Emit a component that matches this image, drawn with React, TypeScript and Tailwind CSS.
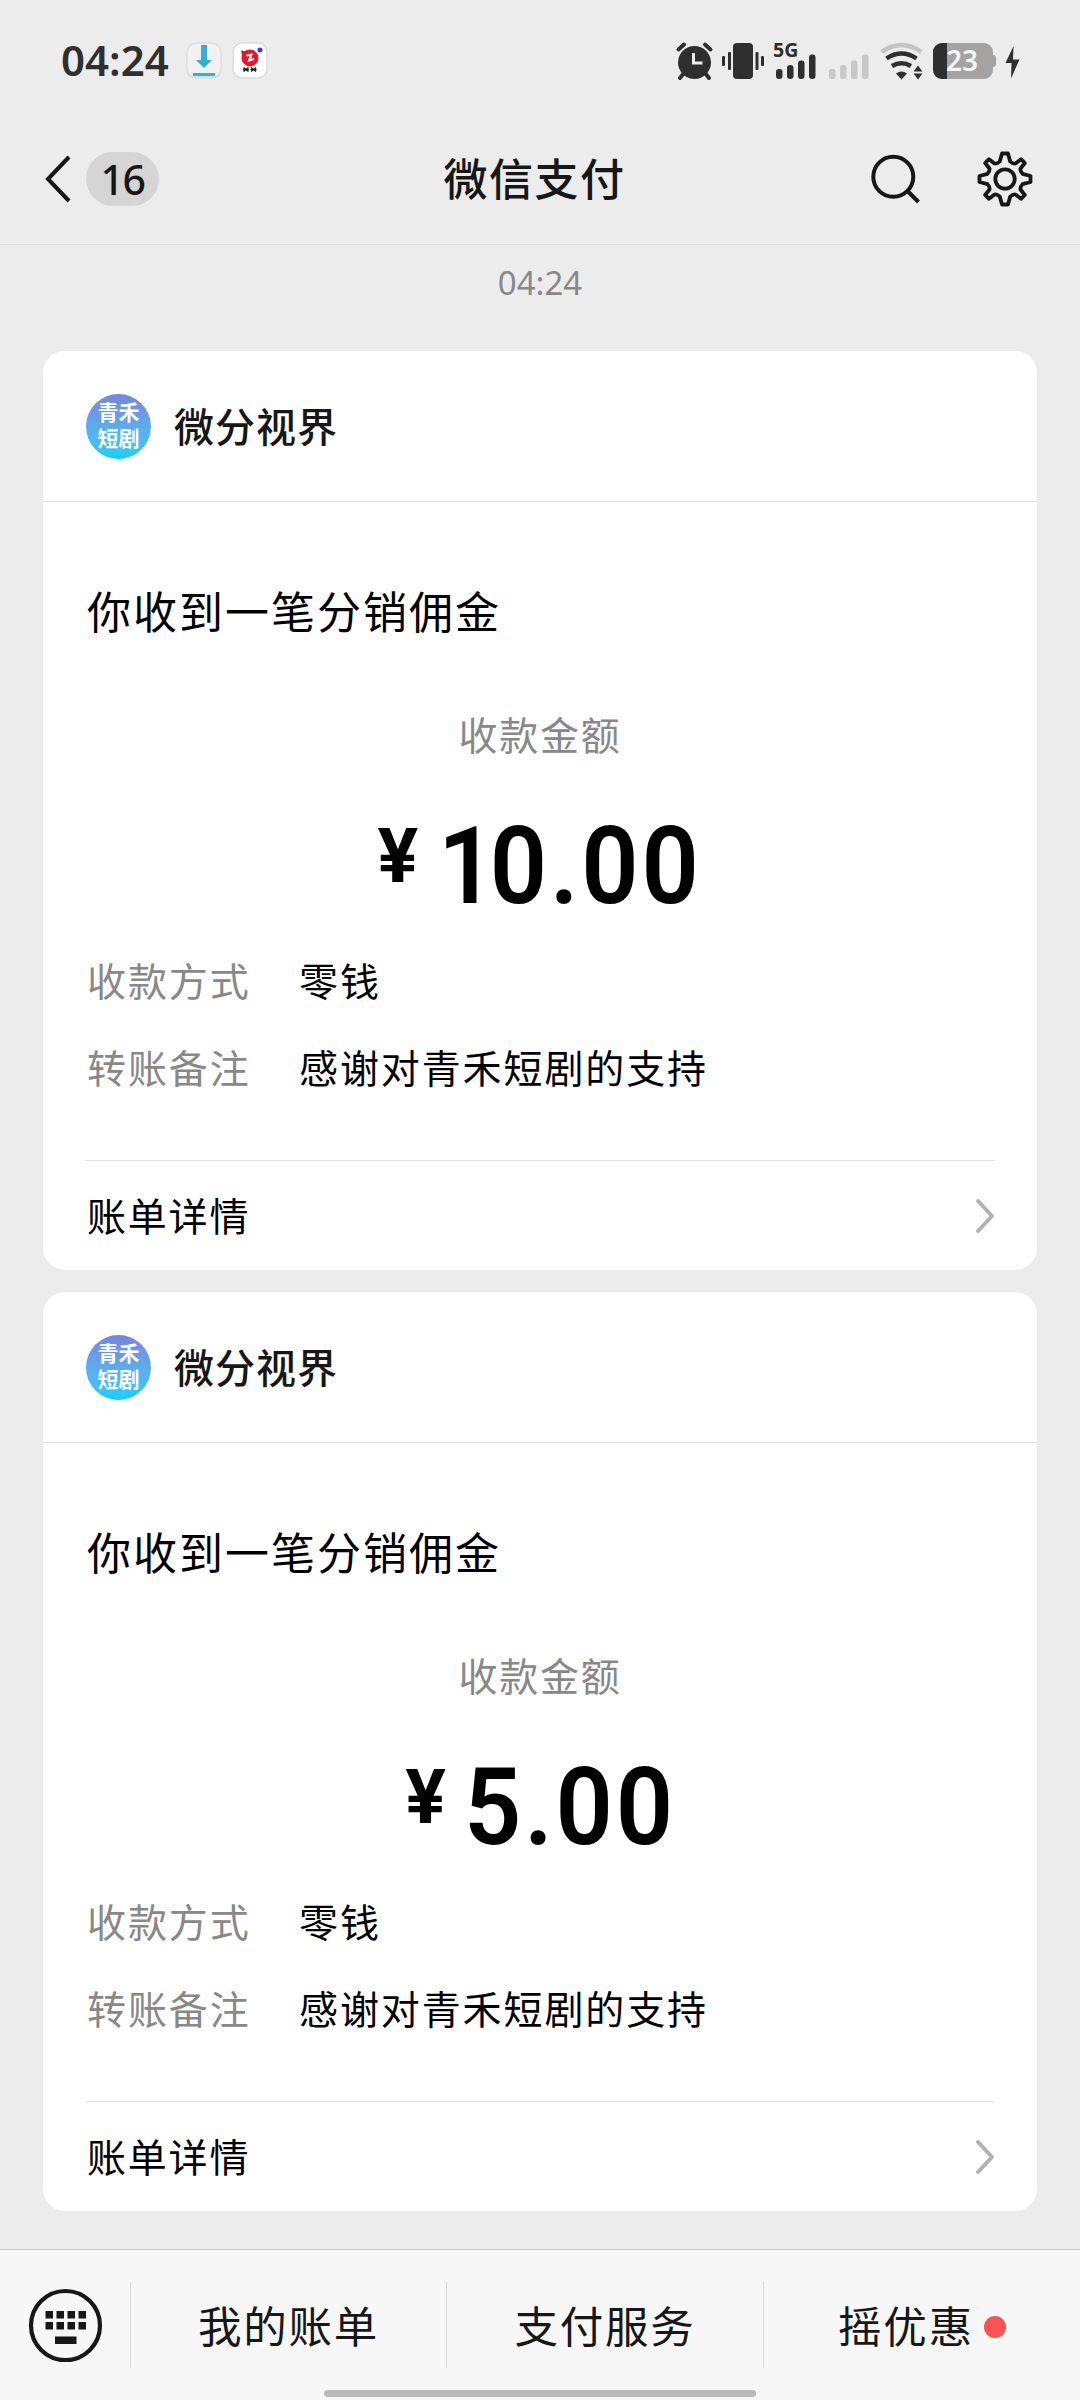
import React from "react";

const CJK = "font-['Noto_Sans_CJK_SC',sans-serif]";

function StatusBar() {
  return (
    <div className="flex h-[120px] items-start">
      <div className="ml-[61px] mt-[40px] h-[40px] w-[109px] whitespace-nowrap font-['Noto_Sans',sans-serif] text-[42px] font-semibold leading-[40px] text-[#2f2f2f]">
        04:24
      </div>
      <svg className="ml-[16px] mt-[42px]" width="36" height="37" viewBox="0 0 36 37">
        <rect x="1" y="1" width="34" height="35" rx="9" fill="#f1f1f1" stroke="#dcdcdc" strokeWidth="1.5" />
        <path d="M15 3h6v15h5L18 26 10 18H15z" fill="#34aed6" />
        <rect x="7" y="31" width="22" height="3.200" fill="#34aed6" />
      </svg>
      <svg className="ml-[10px] mt-[42px]" width="36" height="37" viewBox="0 0 36 37">
        <rect x="1" y="1" width="34" height="35" rx="9" fill="#fff" stroke="#dcdcdc" strokeWidth="1.500" />
        <circle cx="18" cy="16" r="8.500" fill="#ee1427" />
        <path d="M9 8.500l6 1-5 4z" fill="#ee1427" />
        <path d="M14.500 13.500l5-1-2.500 6 5-1.500" fill="none" stroke="#fff" strokeWidth="2" />
        <circle cx="28" cy="8" r="2.500" fill="#4b2fd0" />
        <path d="M11.500 25.500l5 4m0-4l-5 4M11 27.500h6M19 25.500l5 4m0-4l-5 4M18.500 27.500h6" stroke="#17251c" strokeWidth="1.300" />
      </svg>
      <svg className="ml-[407px] mt-[24px]" width="390" height="60" viewBox="675 24 390 60" fill="#2f2f2f">
        <circle cx="694.500" cy="62.500" r="16.500" />
        <path d="M684 73l-4 5M705 73l4 5M678.500 49.500l5.500-5M710.500 49.500l-5.500-5" stroke="#2f2f2f" strokeWidth="4" strokeLinecap="round" />
        <path d="M693.500 53v10h9" fill="none" stroke="#ececec" strokeWidth="3" />
        <rect x="733" y="43" width="20" height="36" rx="4" />
        <rect x="722" y="56" width="3" height="10" rx="1" />
        <rect x="728" y="52" width="3" height="18" rx="1" />
        <rect x="755.500" y="52" width="3" height="18" rx="1" />
        <rect x="761" y="56" width="3" height="10" rx="1" />
        <text x="773" y="57" fontFamily="Noto Sans" fontWeight="700" fontSize="19.500">5G</text>
        <rect x="776" y="69" width="6.500" height="10" rx="3" />
        <rect x="787" y="65" width="6.500" height="14" rx="3" />
        <rect x="798" y="60.500" width="6.500" height="18.500" rx="3" />
        <rect x="809" y="54.500" width="6.500" height="24.500" rx="3" />
        <g fill="#c8c8c8">
          <rect x="829" y="69" width="6.500" height="10" rx="2.500" />
          <rect x="840" y="65" width="6.500" height="14" rx="2.500" />
          <rect x="851" y="60.500" width="6.500" height="18.500" rx="2.500" />
          <rect x="862" y="54.500" width="6.500" height="24.500" rx="2.500" />
        </g>
        <path d="M881.500 52Q901.500 38 921.500 52" fill="none" stroke="#c4c4c4" strokeWidth="4.500" />
        <path d="M886.500 58.500Q901.500 48.500 916.500 58.500M892 66Q901.500 60.500 911 66" fill="none" stroke="#2f2f2f" strokeWidth="4.500" />
        <path d="M896 73.500q5.500-4 11 0l-5.500 6zM913.500 71.500l4.500-6 4.500 6zM913.500 73.500l4.500 6 4.500-6z" />
        <rect x="933" y="43" width="60" height="36" rx="9" fill="#a3a3a3" />
        <path d="M993 55q3 0 3 3v6q0 3-3 3z" fill="#a3a3a3" />
        <path d="M947 43h-5a9 9 0 0 0-9 9v18a9 9 0 0 0 9 9h5z" />
        <text x="946" y="71" fontFamily="Noto Sans" fontWeight="600" fontSize="28" fill="#f4f4f4">23</text>
        <path d="M1013.500 46l-8 17h6l-.5 15.500 8.500-19h-6.500z" />
      </svg>
    </div>
  );
}

function NavBar() {
  return (
    <div className="grid h-[125px] grid-cols-3 border-b border-[#dfdfdf]">
      <div className="flex items-start">
        <svg className="ml-[44px] mt-[34px]" width="28" height="50" viewBox="0 0 28 50">
          <path d="M25 3L4 25 25 47" fill="none" stroke="#171717" strokeWidth="4" />
        </svg>
        <div className="ml-[14px] mt-[32px] flex h-[54px] w-[73px] items-center justify-center rounded-full bg-[#d5d5d5] font-['Noto_Sans',sans-serif] text-[41px] font-medium leading-none tracking-[-1.5px] text-[#171717]">
          16
        </div>
      </div>
      <h1 className={`${CJK} mt-[25px] pr-[11px] text-center text-[44px] font-medium leading-[64px] tracking-[1.5px] text-[#171717]`}>微信支付</h1>
      <div className="flex items-start">
        <svg className="ml-[149px] mt-[32px]" width="54" height="54" viewBox="869 152 54 54">
          <circle cx="893.300" cy="176.700" r="20" fill="none" stroke="#171717" strokeWidth="4" />
          <path d="M907.500 191L918.500 202" stroke="#171717" strokeWidth="4" />
        </svg>
        <svg className="ml-[52px] mt-[29px]" width="60" height="60" viewBox="-30 -30 60 60" fill="none" stroke="#171717" strokeWidth="3.800" strokeLinejoin="round">
          <circle r="9.700" />
          <path d="M-3 -25.500H3L5.200 -17.500Q7.800 -15 10.500 -15.500L16 -19.800 19.800 -16 15.500 -10.500Q15 -7.800 17.500 -5.200L25.500 -3V3L17.500 5.200Q15 7.800 15.500 10.500L19.800 16 16 19.800 10.500 15.500Q7.800 15 5.200 17.500L3 25.500H-3L-5.200 17.500Q-7.800 15 -10.500 15.500L-16 19.800 -19.800 16 -15.500 10.500Q-15 7.800 -17.500 5.200L-25.500 3V-3L-17.500 -5.200Q-15 -7.800 -15.500 -10.500L-19.800 -16 -16 -19.800 -10.500 -15.500Q-7.800 -15 -5.200 -17.500Z" />
        </svg>
      </div>
    </div>
  );
}

function Row({ label, value }: { label: string; value: string }) {
  return (
    <div className="flex h-[87px] items-center pl-px text-[39px] leading-[58px] tracking-[1.9px]">
      <span className="w-[212px] text-[#888]">{label}</span>
      <span className="text-black">{value}</span>
    </div>
  );
}

// The digit 1 is narrower than the others, so it takes tighter tracking.
function Amount({ value }: { value: string }) {
  return (
    <span className="ml-[10px] scale-x-[0.93] whitespace-nowrap text-[108px] font-semibold leading-[128px] tracking-[3px]">
      {value.split(/(1)/).map((part, i) =>
        part === "1" ? (
          <span key={i} className="tracking-[-6px]">{part}</span>
        ) : (
          part
        ),
      )}
    </span>
  );
}

function PaymentCard({ amount }: { amount: string }) {
  return (
    <section className="flex h-[919px] flex-col rounded-[22px] bg-white">
      <header className="flex h-[151px] items-center border-b border-[#e3e3e3] pl-[43px]">
        <div className="flex size-[65px] flex-col items-center justify-center rounded-full bg-linear-to-b from-[#7585dc] to-[#00d0fc] pb-[4px] text-[21px] font-bold leading-[26px] text-white">
          <span>青禾</span>
          <span>短剧</span>
        </div>
        <span className="mb-[3px] ml-[23px] text-[40px] font-medium leading-[60px] tracking-[1px] text-[#171717]">微分视界</span>
      </header>
      <div className="flex grow flex-col px-[43px]">
        <h2 className="mt-[75px] pl-px text-[44px] leading-[66px] tracking-[2px] text-black">你收到一笔分销佣金</h2>
        <p className="mt-[61px] text-center text-[39px] leading-[58px] tracking-[1.800px] text-[#888]">收款金额</p>
        <div className="mt-[40px] flex h-[128px] items-start justify-center pl-[9px] font-['Roboto',sans-serif] text-black">
          <span className="mt-[16px] text-[76px] font-bold leading-[76px]">¥</span>
          <Amount value={amount} />
        </div>
        <div className="mt-[5px]">
          <Row label="收款方式" value="零钱" />
          <Row label="转账备注" value="感谢对青禾短剧的支持" />
        </div>
        <footer className="mt-auto flex h-[110px] items-center justify-between border-t border-[#e3e3e3]">
          <span className="mb-[3px] pl-px text-[39px] leading-[58px] tracking-[1.800px] text-black">账单详情</span>
          <svg className="-mr-[2px]" width="22" height="38" viewBox="0 0 22 38">
            <path d="M4 4L18 19 4 34" fill="none" stroke="#b2b2b2" strokeWidth="4" strokeLinecap="round" strokeLinejoin="round" />
          </svg>
        </footer>
      </div>
    </section>
  );
}

function BottomBar() {
  const item = "flex h-[86px] items-center justify-center border-l border-[#d9d9d9] pb-px";
  return (
    <div className="mt-auto flex h-[151px] flex-col border-t border-[#c6c6c6] bg-[#f7f7f7] text-[43.5px] leading-[64px] tracking-[1.8px] text-[#171717]">
      <div className="mt-[32px] flex">
        <div className="flex w-[130px] items-center pl-[28px]">
          <svg width="75" height="75" viewBox="0 0 75 75">
            <circle cx="37.500" cy="37.500" r="34.500" fill="none" stroke="#171717" strokeWidth="4.200" />
            <path d="M17.500 23h7.500v7.500h-7.500zM28.500 23h7.500v7.500h-7.500zM39.500 23h7.500v7.500h-7.500zM50.500 23h7.500v7.500h-7.500zM17.500 34h7.500v7.500h-7.500zM28.500 34h7.500v7.500h-7.500zM39.500 34h7.500v7.500h-7.500zM50.500 34h7.500v7.500h-7.500zM27 48.500h21.500v7.500h-21.500z" fill="#171717" />
          </svg>
        </div>
        <div className={`${item} w-[316px]`}>我的账单</div>
        <div className={`${item} w-[317px]`}>支付服务</div>
        <div className={`${item} w-[317px]`}>
          摇优惠
          <span className="ml-[10px] mt-[4px] size-[22px] rounded-full bg-[#fa5151]" />
        </div>
      </div>
      <div className="mx-auto mt-[22px] h-[7px] w-[432px] rounded-full bg-[#bababa]" />
    </div>
  );
}

export default function App() {
  return (
    <main className={`${CJK} flex h-[2400px] w-[1080px] flex-col overflow-hidden bg-[#ececec]`}>
      <StatusBar />
      <NavBar />
      <div className="flex h-[106px] justify-center pt-[17px] font-['Noto_Sans',sans-serif] text-[33px] leading-[42px] text-[#888]">04:24</div>
      <div className="flex flex-col gap-[22px] px-[43px]">
        <PaymentCard amount="10.00" />
        <PaymentCard amount="5.00" />
      </div>
      <BottomBar />
    </main>
  );
}
